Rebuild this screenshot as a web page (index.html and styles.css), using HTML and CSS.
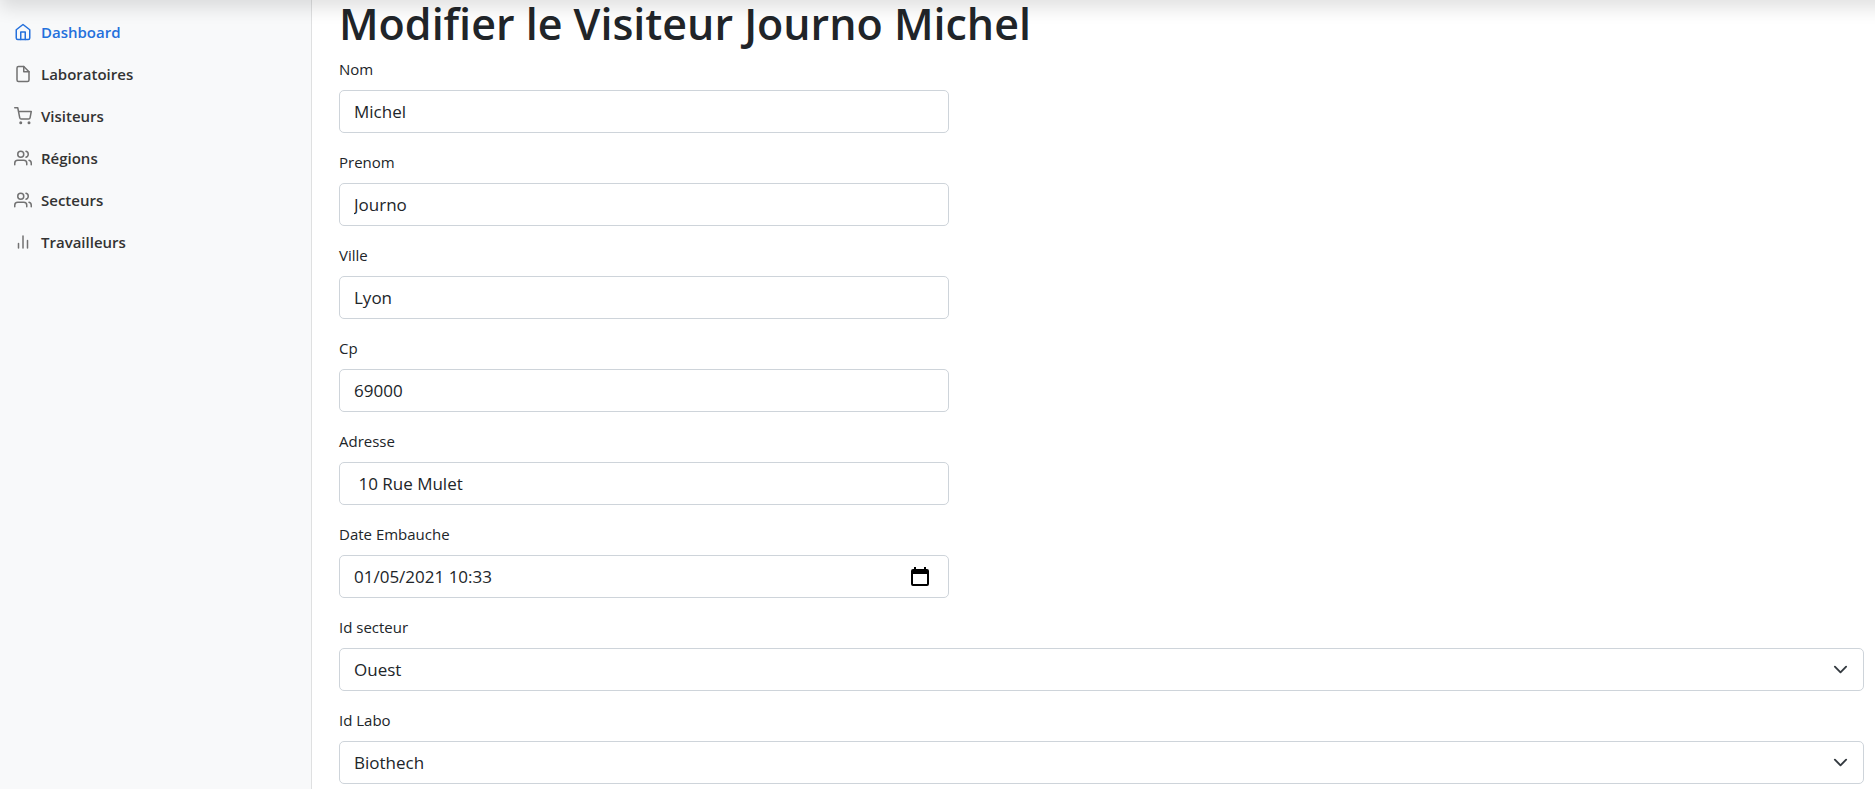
FILE: index.html
```html
<!DOCTYPE html>
<html lang="fr">
<head>
<meta charset="utf-8">
<title>Modifier le Visiteur</title>
<link rel="stylesheet" href="styles.css">
</head>
<body>
<header class="topbar"></header>
<div class="layout">
  <nav class="sidebar">
    <ul class="nav">
      <li><a class="nav-link active" href="#"><svg class="icon" viewBox="0 0 24 24"><path d="M3 9l9-7 9 7v11a2 2 0 0 1-2 2H5a2 2 0 0 1-2-2z"/><path d="M9 22V12h6v10"/></svg>Dashboard</a></li>
      <li><a class="nav-link" href="#"><svg class="icon" viewBox="0 0 24 24"><path d="M13 2H6a2 2 0 0 0-2 2v16a2 2 0 0 0 2 2h12a2 2 0 0 0 2-2V9z"/><path d="M13 2v7h7"/></svg>Laboratoires</a></li>
      <li><a class="nav-link" href="#"><svg class="icon" viewBox="0 0 24 24"><circle cx="9" cy="21" r="1"/><circle cx="20" cy="21" r="1"/><path d="M1 1h4l2.68 13.39a2 2 0 0 0 2 1.61h9.72a2 2 0 0 0 2-1.61L23 6H6"/></svg>Visiteurs</a></li>
      <li><a class="nav-link" href="#"><svg class="icon" viewBox="0 0 24 24"><path d="M17 21v-2a4 4 0 0 0-4-4H5a4 4 0 0 0-4 4v2"/><circle cx="9" cy="7" r="4"/><path d="M23 21v-2a4 4 0 0 0-3-3.87M16 3.13a4 4 0 0 1 0 7.75"/></svg>Régions</a></li>
      <li><a class="nav-link" href="#"><svg class="icon" viewBox="0 0 24 24"><path d="M17 21v-2a4 4 0 0 0-4-4H5a4 4 0 0 0-4 4v2"/><circle cx="9" cy="7" r="4"/><path d="M23 21v-2a4 4 0 0 0-3-3.87M16 3.13a4 4 0 0 1 0 7.75"/></svg>Secteurs</a></li>
      <li><a class="nav-link" href="#"><svg class="icon" viewBox="0 0 24 24"><path d="M18 20V10M12 20V4M6 20v-6"/></svg>Travailleurs</a></li>
    </ul>
  </nav>
  <main class="content">
    <h1 class="title">Modifier le Visiteur Journo Michel</h1>
    <form class="form">
      <div class="field"><label for="nom">Nom</label><input class="control" id="nom" type="text" value="Michel"></div>
      <div class="field"><label for="prenom">Prenom</label><input class="control" id="prenom" type="text" value="Journo"></div>
      <div class="field"><label for="ville">Ville</label><input class="control" id="ville" type="text" value="Lyon"></div>
      <div class="field"><label for="cp">Cp</label><input class="control" id="cp" type="text" value="69000"></div>
      <div class="field"><label for="adresse">Adresse</label><input class="control" id="adresse" type="text" value=" 10 Rue Mulet"></div>
      <div class="field"><label for="date">Date Embauche</label>
        <div class="control date">
          <input class="date-input" id="date" type="text" value="01/05/2021 10:33">
          <button class="date-button" type="button" aria-label="Choisir une date"><svg viewBox="0 0 18 20"><path fill-rule="evenodd" d="M3 0h2v2h8V0h2v2h1a2 2 0 0 1 2 2v13a2 2 0 0 1-2 2H2a2 2 0 0 1-2-2V4a2 2 0 0 1 2-2h1zM2 7v10h14V7z"/></svg></button>
        </div>
      </div>
      <div class="field wide"><label for="secteur">Id secteur</label><div class="select"><select class="control" id="secteur"><option>Ouest</option></select><svg class="chevron" viewBox="0 0 16 16"><path d="M2 5l6 6 6-6"/></svg></div></div>
      <div class="field wide"><label for="labo">Id Labo</label><div class="select"><select class="control" id="labo"><option>Biothech</option></select><svg class="chevron" viewBox="0 0 16 16"><path d="M2 5l6 6 6-6"/></svg></div></div>
    </form>
  </main>
</div>
</body>
</html>
```
FILE: styles.css
```css
* { box-sizing: border-box; }
body {
  margin: 0;
  background: #fff;
  color: #212529;
  font-family: "Segoe UI", "Open Sans", "Noto Sans", sans-serif;
  font-size: 17px;
  line-height: 27px;
}
.topbar {
  position: fixed;
  top: -54px;
  left: 0;
  right: -24px;
  height: 54px;
  box-shadow: 0 8px 18px rgba(0, 0, 0, 0.12);
}
.layout {
  display: grid;
  grid-template-columns: 312px minmax(0, 1fr);
  min-height: 100vh;
}
.sidebar {
  background: #f8f9fa;
  border-right: 1px solid #dfe0e1;
  padding-top: 11px;
}
.nav { list-style: none; margin: 0; padding: 0; }
.nav-link {
  display: flex;
  align-items: center;
  gap: 9px;
  padding: 9px 14px;
  color: #333;
  font-size: 15px;
  font-weight: 550;
  line-height: 24px;
  text-decoration: none;
}
.icon {
  width: 18px;
  height: 18px;
  fill: none;
  stroke: #727272;
  stroke-width: 2;
  stroke-linecap: round;
  stroke-linejoin: round;
}
.active { color: #2470dc; }
.active .icon { stroke: #2470dc; }
.content { padding: 0 11px 0 27px; }
.title {
  margin: 0 0 11px;
  font-size: 43px;
  font-weight: 600;
  line-height: 47px;
}
.form { display: flex; flex-direction: column; gap: 18px; }
.field { display: flex; flex-direction: column; gap: 10px; width: 40%; }
.wide { width: 100%; }
.field label { font-size: 15px; line-height: 22px; }
.control {
  width: 100%;
  height: 43px;
  padding: 7px 14px;
  border: 1px solid #ced4da;
  border-radius: 5px;
  background: #fff;
  color: #212529;
  font: inherit;
  appearance: none;
}
.date { display: flex; align-items: center; padding: 0 19px 0 14px; }
.date-input { flex: 1; min-width: 0; padding: 0; border: 0; background: none; color: inherit; font: inherit; }
.date-button { display: flex; padding: 0; border: 0; background: none; }
.date-button svg { width: 18px; height: 20px; }
.select { position: relative; }
.select .control { display: block; }
.chevron {
  position: absolute;
  top: 14px;
  right: 16px;
  width: 15px;
  height: 15px;
  fill: none;
  stroke: #343a40;
  stroke-width: 2;
  stroke-linecap: round;
  stroke-linejoin: round;
  pointer-events: none;
}
```
